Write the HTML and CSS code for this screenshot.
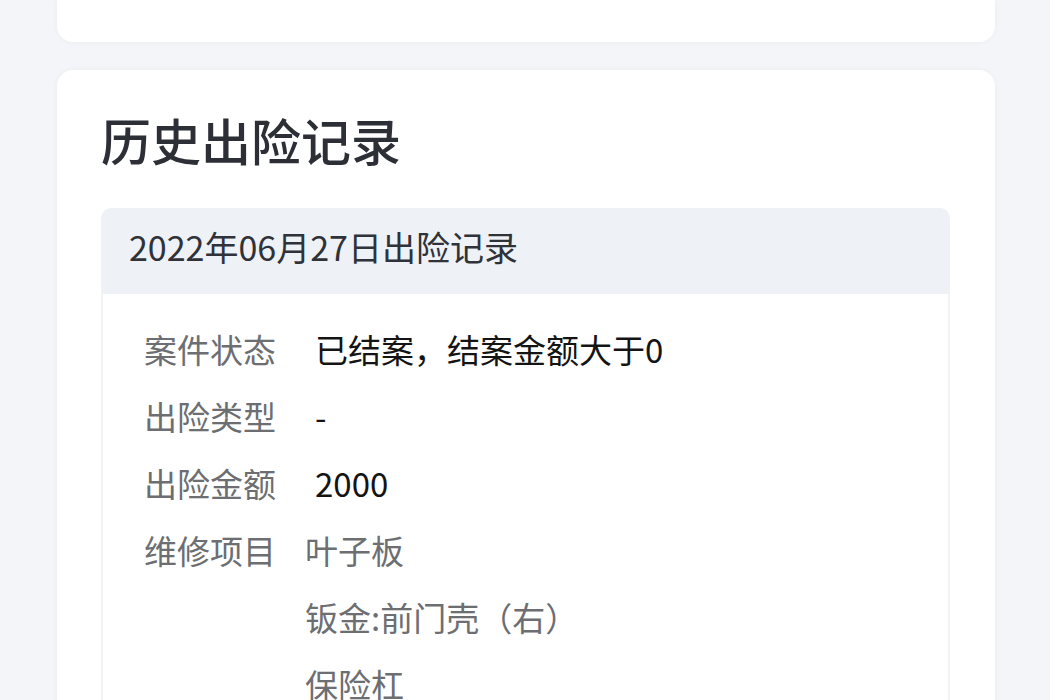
FILE: index.html
```html
<!DOCTYPE html>
<html lang="zh-CN">
<head>
<meta charset="utf-8">
<link rel="stylesheet" href="styles.css">
</head>
<body>
<div class="page">
  <div class="card card-top"></div>
  <div class="card card-main">
    <h1 class="title">历史出险记录</h1>
    <div class="record">
      <div class="record-head">2022年06月27日出险记录</div>
      <div class="record-body">
        <div class="row">
          <div class="label">案件状态</div>
          <div class="value value-pad">已结案，结案金额大于0</div>
        </div>
        <div class="row">
          <div class="label">出险类型</div>
          <div class="value value-pad">-</div>
        </div>
        <div class="row">
          <div class="label">出险金额</div>
          <div class="value value-pad">2000</div>
        </div>
        <div class="row">
          <div class="label">维修项目</div>
          <div class="items">
            <div class="item">叶子板</div>
            <div class="item">钣金:前门壳（右）</div>
            <div class="item">保险杠</div>
          </div>
        </div>
      </div>
    </div>
  </div>
</div>
</body>
</html>
```

FILE: styles.css
```css
html, body {
  margin: 0;
  padding: 0;
}
body {
  background: #f4f5f8;
  font-family: "Noto Sans CJK SC", "Noto Sans", sans-serif;
  overflow: hidden;
  height: 700px;
}
.page {
  display: flex;
  flex-direction: column;
  gap: 28px;
  padding: 0 55px 0 57px;
}
.card {
  background: #ffffff;
  border-radius: 16px;
  box-shadow: 0 0 6px rgba(20, 30, 60, 0.04);
}
.card-top {
  height: 42px;
  border-radius: 0 0 16px 16px;
}
.card-main {
  padding: 26px 45px 40px 44px;
}
.title {
  margin: 0;
  font-size: 50px;
  font-weight: 500;
  line-height: 86px;
  color: #2c2f35;
}
.record {
  margin-top: 26px;
  border-radius: 10px 10px 0 0;
}
.record-head {
  background: #eef1f6;
  border-radius: 10px 10px 0 0;
  height: 86px;
  box-sizing: border-box;
  display: flex;
  align-items: center;
  padding: 0 0 10px 28px;
  font-size: 34px;
  color: #2f3238;
}
.record-body {
  border: 2px solid #f1f2f5;
  border-top: none;
  padding: 22px 0 0 41px;
}
.row {
  display: flex;
  gap: 26px;
}
.label {
  width: 135px;
  flex: none;
  font-size: 33px;
  line-height: 67px;
  color: #6c6e72;
}
.value {
  font-size: 33px;
  line-height: 67px;
  color: #141414;
}
.value-pad {
  padding-left: 10px;
}
.items {
  display: flex;
  flex-direction: column;
}
.item {
  font-size: 33px;
  line-height: 67px;
  color: #6c6e72;
}
```
